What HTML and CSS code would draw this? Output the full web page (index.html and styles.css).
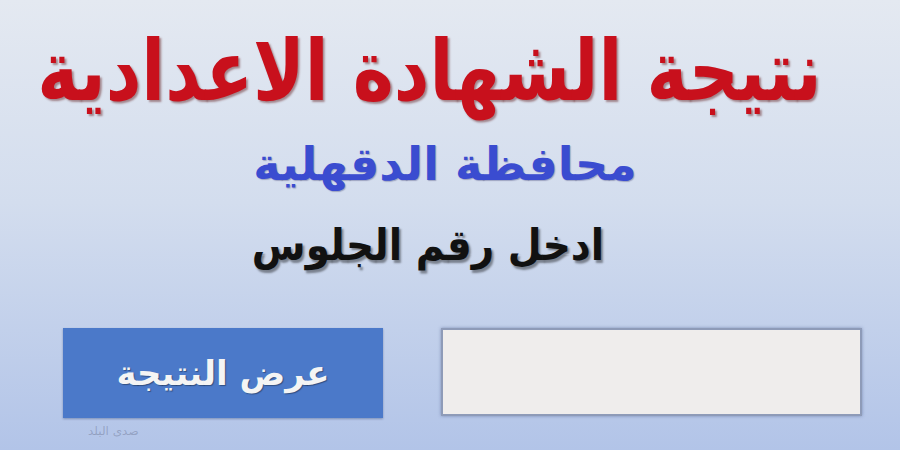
FILE: index.html
```html
<!DOCTYPE html>
<html lang="ar" dir="rtl">
<head>
  <meta charset="UTF-8" />
  <title>نتيجة الشهادة الاعدادية</title>
  <link rel="stylesheet" href="styles.css">
</head>
<body>
  <div id="pagina">
    <h1 class="titulo">نتيجة الشهادة الاعدادية</h1>
    <div class="subtitulo">محافظة الدقهلية</div>
    <div class="rotulo">ادخل رقم الجلوس</div>
    <div id="formulario">
      <button class="botao">عرض النتيجة</button>
      <input class="campo" type="text" />
    </div>
    <div class="marca">صدى البلد</div>
  </div>
</body>
</html>
```

FILE: styles.css
```css
body {
  margin: 0;
  width: 900px;
  height: 450px;
  overflow: hidden;
  background: linear-gradient(to bottom, #e4e9f1 0%, #d3ddee 45%, #b2c4e8 100%);
  font-family: "DejaVu Sans", sans-serif;
}

#pagina {
  position: relative;
  height: 450px;
  display: flex;
  flex-direction: column;
  align-items: center;
}

.titulo {
  margin: 20px 0 0 0;
  padding-right: 44px;
  font-size: 74px;
  font-weight: bold;
  line-height: 100px;
  color: #c8101c;
  text-shadow: 2px 2px 2px rgba(90, 20, 20, 0.45);
  white-space: nowrap;
  transform: scale(0.94, 1.14);
}

.subtitulo {
  margin-top: 14px;
  padding-right: 10px;
  font-size: 46px;
  font-weight: bold;
  line-height: 60px;
  color: #3a4cd0;
  text-shadow: 1px 1px 1px rgba(30, 30, 90, 0.3);
}

.rotulo {
  margin-top: 22px;
  padding-right: 44px;
  font-size: 39px;
  font-weight: bold;
  line-height: 60px;
  color: #111;
  text-shadow: 2px 2px 2px rgba(0, 0, 0, 0.4);
  transform: scaleY(1.1);
}

#formulario {
  direction: ltr;
  align-self: stretch;
  display: flex;
  align-items: flex-start;
  gap: 58px;
  margin-top: 52px;
  padding-left: 63px;
}

.botao {
  width: 320px;
  height: 90px;
  border: none;
  border-radius: 0;
  background: #4b79c9;
  color: #f4f4f4;
  font-family: "DejaVu Sans", sans-serif;
  font-size: 34px;
  font-weight: bold;
  text-shadow: 1px 1px 1px rgba(0, 0, 0, 0.35);
  box-shadow: 0 1px 2px rgba(40, 60, 110, 0.4);
}

.campo {
  box-sizing: border-box;
  width: 421px;
  height: 88px;
  margin: 0;
  border: 2px solid #8e9bb8;
  background: #efedec;
  box-shadow: 0 0 3px rgba(60, 80, 130, 0.5);
}

.marca {
  position: absolute;
  left: 88px;
  top: 424px;
  font-size: 12px;
  color: rgba(110, 120, 150, 0.45);
}
```
